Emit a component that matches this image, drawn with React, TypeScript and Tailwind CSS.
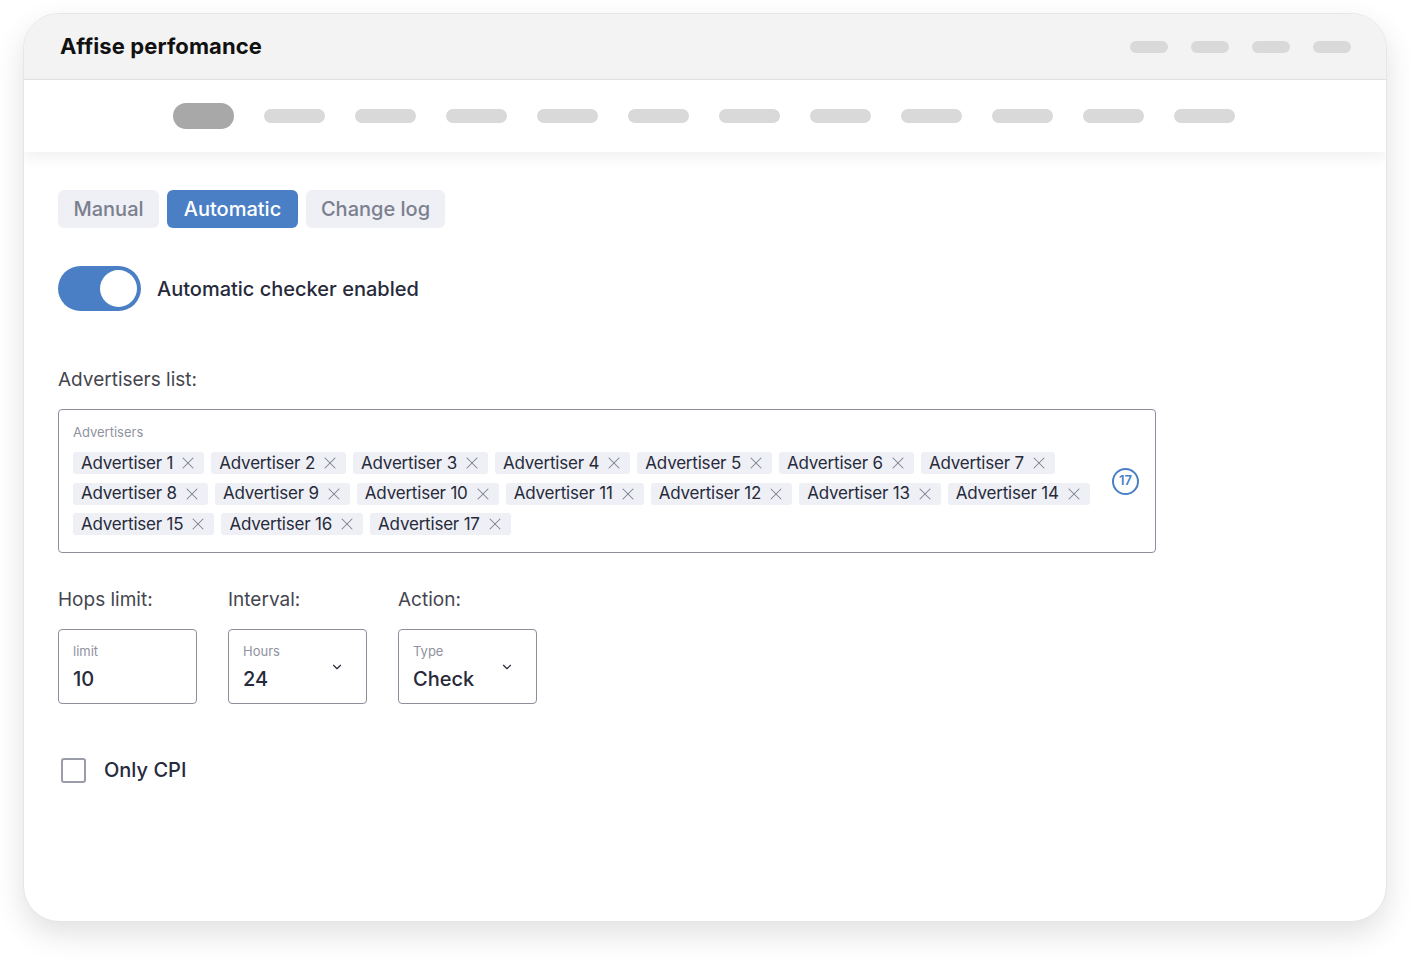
import { ChevronDown, X } from "lucide-react";

const rows = [
  [1, 2, 3, 4, 5, 6, 7],
  [8, 9, 10, 11, 12, 13, 14],
  [15, 16, 17],
];

const navPills = Array.from({ length: 11 }, (_, i) => i);

function Chip({ n }: { n: number }) {
  return (
    <div className="flex h-[22px] items-center gap-[5px] rounded-[3px] bg-[#eef0f5] pl-[8px] pr-[6px]">
      <span className="text-[17px] leading-none tracking-[-0.2px] text-[#272a3b]">
        Advertiser {n}
      </span>
      <X className="h-[20px] w-[20px] text-[#7d8090]" strokeWidth={1.25} />
    </div>
  );
}

function Field({
  label,
  hint,
  value,
  select,
}: {
  label: string;
  hint: string;
  value: string;
  select?: boolean;
}) {
  return (
    <div className="flex w-[139px] flex-col">
      <div className="text-[19px] leading-none text-[#45464f]">{label}</div>
      <div className="mt-[20px] flex h-[75px] items-center justify-between rounded-[4px] border border-[#8d909c] pl-[14px] pr-[22px]">
        <div className="flex flex-col pt-[1px]">
          <span className="text-[13px] leading-none text-[#8f92a0]">{hint}</span>
          <span className="mt-[11px] text-[20px] leading-none font-medium text-[#272a3b]">
            {value}
          </span>
        </div>
        {select && <ChevronDown className="h-[14px] w-[14px] text-[#272a3b]" strokeWidth={2} />}
      </div>
    </div>
  );
}

export default function App() {
  return (
    <div
      className="min-h-[960px] w-full bg-white px-[23px] pt-[13px]"
      style={{ fontFamily: "Inter, 'Noto Sans', sans-serif" }}
    >
      <div className="flex h-[909px] flex-col overflow-hidden rounded-[36px] border border-[#e6e6e6] bg-white shadow-[0_12px_30px_rgba(0,0,0,0.12)]">
        <div className="flex h-[66px] items-center justify-between border-b border-[#e2e2e2] bg-[#f3f3f3] pl-[36px] pr-[35px]">
          <h1 className="text-[22px] font-bold tracking-[0.1px] text-[#111]">Affise perfomance</h1>
          <div className="flex gap-[23px]">
            {[0, 1, 2, 3].map((i) => (
              <div key={i} className="h-[12px] w-[38px] rounded-full bg-[#d9d9d9]" />
            ))}
          </div>
        </div>

        <div className="relative z-10 flex h-[72px] items-center gap-[30px] bg-white pl-[149px] shadow-[0_6px_14px_rgba(0,0,0,0.06)]">
          <div className="h-[26px] w-[61px] rounded-full bg-[#a8a8a8]" />
          {navPills.map((i) => (
            <div key={i} className="h-[14px] w-[61px] rounded-full bg-[#d9d9d9]" />
          ))}
        </div>

        <div className="flex flex-col pl-[34px] pt-[38px]">
          <div className="flex gap-[8px]">
            <div className="flex h-[38px] w-[101px] items-center justify-center rounded-[6px] bg-[#eef0f5] text-[20px] font-medium text-[#7b7f8e]">
              Manual
            </div>
            <div className="flex h-[38px] w-[131px] items-center justify-center rounded-[6px] bg-[#4a7fc6] text-[20px] font-medium text-white">
              Automatic
            </div>
            <div className="flex h-[38px] w-[139px] items-center justify-center rounded-[6px] bg-[#eef0f5] text-[20px] font-medium text-[#7b7f8e]">
              Change log
            </div>
          </div>

          <div className="mt-[38px] flex items-center gap-[16px]">
            <div className="flex h-[45px] w-[83px] items-center justify-end rounded-full bg-[#4a7fc6] pr-[4px]">
              <div className="h-[37px] w-[37px] rounded-full bg-white" />
            </div>
            <span className="text-[20px] font-medium text-[#272a3b]">Automatic checker enabled</span>
          </div>

          <div className="mt-[59px] text-[19px] leading-none text-[#45464f]">Advertisers list:</div>

          <div className="mt-[20px] flex h-[144px] w-[1098px] items-center rounded-[4px] border border-[#8d909c] pl-[14px] pr-[16px]">
            <div className="flex flex-1 flex-col self-start pt-[16px]">
              <span className="text-[13px] leading-none text-[#8f92a0]">Advertisers</span>
              <div className="mt-[13px] flex flex-col gap-[8.5px]">
                {rows.map((row, r) => (
                  <div key={r} className="flex gap-[7px]">
                    {row.map((n) => (
                      <Chip key={n} n={n} />
                    ))}
                  </div>
                ))}
              </div>
            </div>
            <div className="flex h-[27px] w-[27px] items-center justify-center rounded-full border-2 border-[#4a7fc6] text-[13px] font-semibold text-[#4a7fc6]">
              17
            </div>
          </div>

          <div className="mt-[37px] flex gap-[31px]">
            <Field label="Hops limit:" hint="limit" value="10" />
            <Field label="Interval:" hint="Hours" value="24" select />
            <Field label="Action:" hint="Type" value="Check" select />
          </div>

          <div className="mt-[51px] flex items-center gap-[18px] pl-[3px]">
            <div className="h-[25px] w-[25px] rounded-[3px] border-2 border-[#9a9caa]" />
            <span className="text-[20px] font-medium text-[#272a3b]">Only CPI</span>
          </div>
        </div>
      </div>
    </div>
  );
}
